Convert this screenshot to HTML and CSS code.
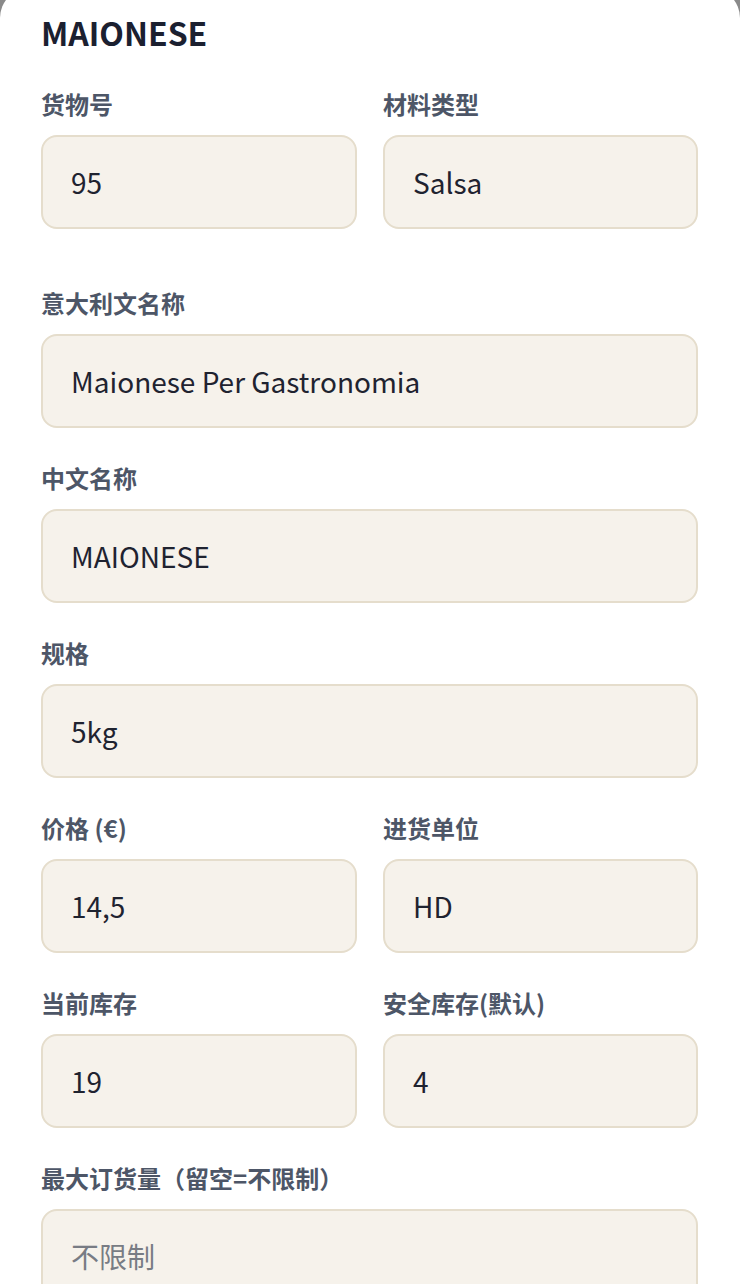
FILE: index.html
```html
<!DOCTYPE html>
<html lang="zh-CN">
<head>
<meta charset="utf-8">
<title>MAIONESE</title>
<link rel="stylesheet" href="styles.css">
</head>
<body>
<div class="sheet">
  <h1 class="title">MAIONESE</h1>
  <div class="form">
    <div class="row row-first">
      <div class="field">
        <label class="label">货物号</label>
        <div class="input">95</div>
      </div>
      <div class="field">
        <label class="label">材料类型</label>
        <div class="input">Salsa</div>
      </div>
    </div>
    <div class="field">
      <label class="label">意大利文名称</label>
      <div class="input">Maionese Per Gastronomia</div>
    </div>
    <div class="field">
      <label class="label">中文名称</label>
      <div class="input">MAIONESE</div>
    </div>
    <div class="field">
      <label class="label">规格</label>
      <div class="input">5kg</div>
    </div>
    <div class="row">
      <div class="field">
        <label class="label">价格 (€)</label>
        <div class="input">14,5</div>
      </div>
      <div class="field">
        <label class="label">进货单位</label>
        <div class="input">HD</div>
      </div>
    </div>
    <div class="row">
      <div class="field">
        <label class="label">当前库存</label>
        <div class="input">19</div>
      </div>
      <div class="field">
        <label class="label">安全库存(默认)</label>
        <div class="input">4</div>
      </div>
    </div>
    <div class="field">
      <label class="label">最大订货量（留空=不限制）</label>
      <div class="input placeholder">不限制</div>
    </div>
  </div>
</div>
</body>
</html>
```

FILE: styles.css
```css
html, body {
  margin: 0;
  padding: 0;
}
body {
  background: #8a8a8a;
  font-family: "Noto Sans CJK SC", "Noto Sans", sans-serif;
  overflow: hidden;
}
.sheet {
  background: #ffffff;
  margin-top: -12px;
  border-radius: 30px 30px 0 0;
  padding: 24px 42px 40px 41px;
  min-height: 1400px;
  box-sizing: border-box;
}
.title {
  margin: 0;
  font-size: 32px;
  line-height: 40px;
  font-weight: 700;
  color: #1b2030;
}
.form {
  margin-top: 36px;
  display: flex;
  flex-direction: column;
  gap: 34px;
}
.row {
  display: grid;
  grid-template-columns: 316px 315px;
  column-gap: 26px;
}
.row-first {
  margin-bottom: 24px;
}
.field {
  display: flex;
  flex-direction: column;
}
.label {
  font-size: 24px;
  line-height: 32px;
  font-weight: 700;
  color: #4d5667;
  margin-bottom: 15px;
}
.input {
  height: 94px;
  box-sizing: border-box;
  border: 2px solid #e5ddcc;
  border-radius: 16px;
  background: #f6f2eb;
  display: flex;
  align-items: center;
  padding: 0 28px;
  font-size: 28px;
  color: #1f2330;
}
.placeholder {
  color: #787c84;
}
```
